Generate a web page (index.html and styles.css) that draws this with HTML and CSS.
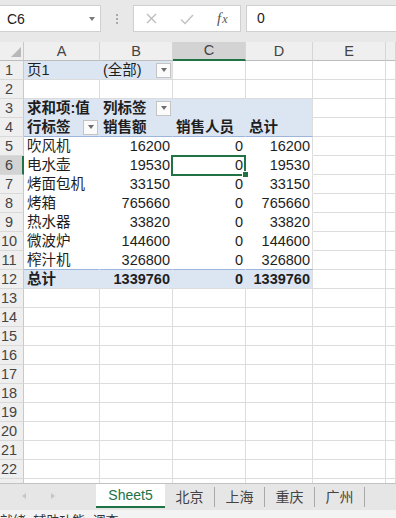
FILE: index.html
```html
<!DOCTYPE html>
<html lang="zh-CN">
<head>
<meta charset="utf-8">
<title>数据透视表</title>
<link rel="stylesheet" href="styles.css">
</head>
<body>
<div class="app">
  <div class="fbar">
    <div class="namebox"><span>C6</span><span class="nb-arrow"></span></div>
    <div class="dots"><i></i><i></i><i></i></div>
    <div class="fbtns">
      <svg class="ic-x" width="11" height="11" viewBox="0 0 11 11"><path d="M1 1 L10 10 M10 1 L1 10" stroke="#bdbdbd" stroke-width="1.4" fill="none"/></svg>
      <svg class="ic-ok" width="14" height="11" viewBox="0 0 14 11"><path d="M1 5.5 L5 9.5 L13 1" stroke="#c2c2c2" stroke-width="1.5" fill="none"/></svg>
      <span class="fx"><i>f</i><i class="sx">x</i></span>
    </div>
    <div class="finput">0</div>
  </div>

  <div class="sheet">
    <div class="row">
      <div class="corner"><svg width="23" height="18" viewBox="0 0 23 18"><polygon points="21,5 21,15 11,15" fill="#b8b8b8"/></svg></div>
      <div class="ch">A</div><div class="ch">B</div><div class="ch sel">C</div><div class="ch">D</div><div class="ch">E</div><div class="ch"></div>
    </div>
    <div class="row">
      <div class="rh">1</div>
      <div class="c blue nr">页1</div>
      <div class="c blue ddcell"><span>(全部)</span><span class="dd"></span></div>
      <div class="c"></div><div class="c"></div><div class="c"></div><div class="c"></div>
    </div>
    <div class="row">
      <div class="rh">2</div>
      <div class="c"></div><div class="c"></div><div class="c"></div><div class="c"></div><div class="c"></div><div class="c"></div>
    </div>
    <div class="row">
      <div class="rh">3</div>
      <div class="c blue p b">求和项:值</div>
      <div class="c blue p b ddcell"><span>列标签</span><span class="dd"></span></div>
      <div class="c blue p"></div>
      <div class="c blue pe"></div>
      <div class="c"></div><div class="c"></div>
    </div>
    <div class="row">
      <div class="rh">4</div>
      <div class="c blue p b bl ddcell"><span>行标签</span><span class="dd"></span></div>
      <div class="c blue p b bl">销售额</div>
      <div class="c blue p b bl">销售人员</div>
      <div class="c blue pe b bl">总计</div>
      <div class="c"></div><div class="c"></div>
    </div>
    <div class="row">
      <div class="rh">5</div>
      <div class="c p">吹风机</div><div class="c p num">16200</div><div class="c p num">0</div><div class="c pe num">16200</div>
      <div class="c"></div><div class="c"></div>
    </div>
    <div class="row">
      <div class="rh sel">6</div>
      <div class="c p">电水壶</div><div class="c p num">19530</div><div class="c p num cur">0</div><div class="c pe num">19530</div>
      <div class="c"></div><div class="c"></div>
    </div>
    <div class="row">
      <div class="rh">7</div>
      <div class="c p">烤面包机</div><div class="c p num">33150</div><div class="c p num">0</div><div class="c pe num">33150</div>
      <div class="c"></div><div class="c"></div>
    </div>
    <div class="row">
      <div class="rh">8</div>
      <div class="c p">烤箱</div><div class="c p num">765660</div><div class="c p num">0</div><div class="c pe num">765660</div>
      <div class="c"></div><div class="c"></div>
    </div>
    <div class="row">
      <div class="rh">9</div>
      <div class="c p">热水器</div><div class="c p num">33820</div><div class="c p num">0</div><div class="c pe num">33820</div>
      <div class="c"></div><div class="c"></div>
    </div>
    <div class="row">
      <div class="rh">10</div>
      <div class="c p">微波炉</div><div class="c p num">144600</div><div class="c p num">0</div><div class="c pe num">144600</div>
      <div class="c"></div><div class="c"></div>
    </div>
    <div class="row">
      <div class="rh">11</div>
      <div class="c p bl">榨汁机</div><div class="c p num bl">326800</div><div class="c p num bl">0</div><div class="c pe num bl">326800</div>
      <div class="c"></div><div class="c"></div>
    </div>
    <div class="row">
      <div class="rh">12</div>
      <div class="c blue b nr">总计</div><div class="c blue b nr num">1339760</div><div class="c blue b nr num">0</div><div class="c blue b num">1339760</div>
      <div class="c"></div><div class="c"></div>
    </div>
    <div class="row"><div class="rh">13</div><div class="c"></div><div class="c"></div><div class="c"></div><div class="c"></div><div class="c"></div><div class="c"></div></div>
    <div class="row"><div class="rh">14</div><div class="c"></div><div class="c"></div><div class="c"></div><div class="c"></div><div class="c"></div><div class="c"></div></div>
    <div class="row"><div class="rh">15</div><div class="c"></div><div class="c"></div><div class="c"></div><div class="c"></div><div class="c"></div><div class="c"></div></div>
    <div class="row"><div class="rh">16</div><div class="c"></div><div class="c"></div><div class="c"></div><div class="c"></div><div class="c"></div><div class="c"></div></div>
    <div class="row"><div class="rh">17</div><div class="c"></div><div class="c"></div><div class="c"></div><div class="c"></div><div class="c"></div><div class="c"></div></div>
    <div class="row"><div class="rh">18</div><div class="c"></div><div class="c"></div><div class="c"></div><div class="c"></div><div class="c"></div><div class="c"></div></div>
    <div class="row"><div class="rh">19</div><div class="c"></div><div class="c"></div><div class="c"></div><div class="c"></div><div class="c"></div><div class="c"></div></div>
    <div class="row"><div class="rh">20</div><div class="c"></div><div class="c"></div><div class="c"></div><div class="c"></div><div class="c"></div><div class="c"></div></div>
    <div class="row"><div class="rh">21</div><div class="c"></div><div class="c"></div><div class="c"></div><div class="c"></div><div class="c"></div><div class="c"></div></div>
    <div class="row"><div class="rh">22</div><div class="c"></div><div class="c"></div><div class="c"></div><div class="c"></div><div class="c"></div><div class="c"></div></div>
    <div class="row"><div class="rh"></div><div class="c"></div><div class="c"></div><div class="c"></div><div class="c"></div><div class="c"></div><div class="c"></div></div>
  </div>

  <div class="tabs">
    <div class="nav"><span class="arr-l"></span><span class="arr-r"></span></div>
    <div class="tab active">Sheet5</div>
    <div class="tab">北京</div>
    <div class="tab">上海</div>
    <div class="tab">重庆</div>
    <div class="tab">广州</div>
  </div>
  <div class="status">就绪&nbsp;&nbsp;辅助功能: 调查</div>
</div>
</body>
</html>
```

FILE: styles.css
```css
* { box-sizing: border-box; }
html, body { margin: 0; padding: 0; }
body {
  width: 396px;
  height: 518px;
  overflow: hidden;
  background: #fff;
  color: #1e1e1e;
  font-family: "Liberation Sans", "Noto Sans CJK SC", sans-serif;
}
.app { display: flex; flex-direction: column; height: 518px; }

/* formula bar */
.fbar {
  flex: none;
  height: 42px;
  background: #e8e8e8;
  display: flex;
  align-items: flex-start;
  padding-top: 5px;
}
.namebox {
  margin-left: -1px;
  width: 102px;
  height: 27px;
  background: #fff;
  border: 1px solid #d0d0d0;
  display: flex;
  align-items: center;
  justify-content: space-between;
  padding: 0 5px 0 7px;
  font-size: 14px;
  color: #222;
}
.nb-arrow {
  width: 0; height: 0;
  border-left: 3.5px solid transparent;
  border-right: 3.5px solid transparent;
  border-top: 4px solid #7a7a7a;
}
.dots {
  width: 32px;
  display: flex;
  flex-direction: column;
  align-items: center;
  gap: 2px;
  padding-top: 9px;
}
.dots i { display: block; width: 2px; height: 2px; background: #a9a9a9; }
.fbtns {
  width: 108px;
  height: 27px;
  background: #fff;
  border: 1px solid #d0d0d0;
  display: flex;
  align-items: center;
  padding-left: 12px;
}
.ic-x { margin-right: 23px; }
.ic-ok { margin-right: 23px; margin-top: 1px; }
.fx {
  font-family: "Liberation Serif", serif;
  color: #555;
  font-size: 15px;
  display: flex;
  align-items: baseline;
}
.fx i { font-style: italic; }
.fx .sx { font-size: 12px; margin-left: 1px; }
.finput {
  flex: 1;
  margin-left: 5px;
  margin-right: -2px;
  height: 27px;
  background: #fff;
  border: 1px solid #d0d0d0;
  padding-left: 10px;
  font-size: 14px;
  line-height: 25px;
  color: #222;
}

/* sheet grid */
.sheet { flex: none; height: 441px; overflow: hidden; }
.row {
  display: grid;
  grid-template-columns: 24px 76px 73px 73px 67px 73px 1fr;
  height: 19px;
}
.corner {
  background: #efefef;
  border-right: 1px solid #c9c9c9;
  border-bottom: 1px solid #bdbdbd;
}
.corner svg { display: block; }
.ch {
  background: #efefef;
  border-right: 1px solid #d6d6d6;
  border-bottom: 1px solid #bdbdbd;
  text-align: center;
  font-size: 14.5px;
  line-height: 18px;
  color: #444;
}
.ch.sel {
  background: #d3d3d3;
  border-bottom: 2px solid #217346;
  line-height: 17px;
}
.rh {
  background: #efefef;
  border-right: 1px solid #c9c9c9;
  border-bottom: 1px solid #d9d9d9;
  text-align: center;
  padding-right: 5px;
  font-size: 14.5px;
  line-height: 18px;
  color: #444;
}
.rh.sel {
  background: #d3d3d3;
  border-right: 2px solid #217346;
  padding-right: 4px;
}
.c {
  border-right: 1px solid #dcdcdc;
  border-bottom: 1px solid #dcdcdc;
  padding: 0 2px 0 3px;
  font-size: 14.5px;
  line-height: 18px;
  white-space: nowrap;
  color: #1e1e1e;
}
.blue { background: #dce5f2; }
.nr { border-right-color: transparent; }
.p { border-right-color: transparent; border-bottom-color: transparent; }
.pe { border-bottom-color: transparent; }
.bl { border-bottom-color: #9db5db; }
.b { font-weight: bold; }
.num { text-align: right; }
.ddcell {
  display: flex;
  align-items: center;
  justify-content: space-between;
  padding-right: 1px;
}
.dd {
  flex: none;
  width: 15px;
  height: 15px;
  border: 1px solid #c4c4c4;
  background: #fbfbfb;
  display: flex;
  align-items: center;
  justify-content: center;
}
.dd::after {
  content: "";
  width: 0; height: 0;
  border-left: 3.5px solid transparent;
  border-right: 3.5px solid transparent;
  border-top: 4px solid #6d6d6d;
}
.cur { position: relative; }
.cur::before {
  content: "";
  position: absolute;
  left: -2px; top: -1px; right: -1px; bottom: -2px;
  border: 2px solid #217346;
  z-index: 2;
}
.cur::after {
  content: "";
  position: absolute;
  right: -4px; bottom: -4px;
  width: 5px; height: 5px;
  background: #217346;
  border: 1px solid #fff;
  box-sizing: content-box;
  z-index: 3;
}

/* sheet tabs */
.tabs {
  flex: none;
  height: 27px;
  background: #e6e6e6;
  border-top: 1px solid #c2c2c2;
  display: flex;
  align-items: flex-start;
}
.nav {
  width: 96px;
  display: flex;
  gap: 25px;
  padding: 9px 0 0 22px;
}
.arr-l, .arr-r {
  width: 0; height: 0;
  border-top: 3.5px solid transparent;
  border-bottom: 3.5px solid transparent;
}
.arr-l { border-right: 4px solid #c6c6c6; }
.arr-r { border-left: 4px solid #c6c6c6; }
.tab {
  width: 50px;
  height: 20px;
  margin-top: 3px;
  border-right: 1px solid #a8a8a8;
  text-align: center;
  font-size: 14px;
  line-height: 20px;
  color: #444;
}
.tab.active {
  width: 69px;
  height: 24px;
  margin-top: 0;
  border-right: none;
  background: #fff;
  border-bottom: 2px solid #217346;
  color: #217346;
  line-height: 22px;
}

/* status bar */
.status {
  flex: none;
  height: 8px;
  overflow: hidden;
  background: #f3f3f3;
  padding-top: 3px;
  font-size: 13px;
  line-height: 15px;
  color: #333;
  white-space: nowrap;
}
```
